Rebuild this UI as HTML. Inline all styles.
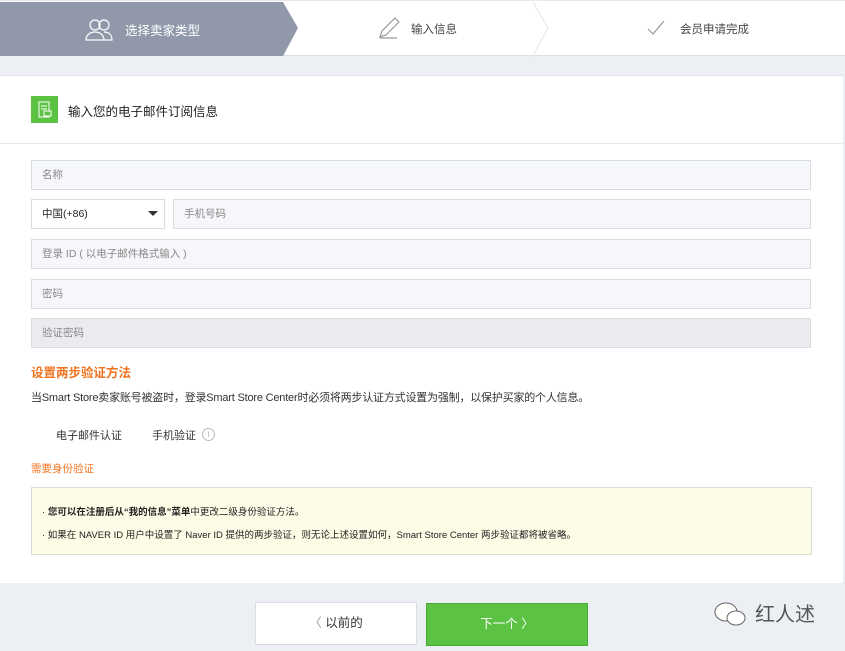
<!DOCTYPE html>
<html><head><meta charset="utf-8"><style>
*{margin:0;padding:0;box-sizing:border-box}
body{width:845px;height:651px;background:#eceff3;font-family:"Liberation Sans","Noto Sans CJK SC",sans-serif;position:relative;overflow:hidden;color:#333}
.abs{position:absolute}
.inp{position:absolute;left:31px;width:780px;height:30px;border:1px solid #d9dce2;background:#f6f7fa;font-size:10.5px;color:#888;padding-left:10px;line-height:28px}
</style></head><body>
<div class="abs" style="left:0;top:0;width:845px;height:56px;background:#fff;border-bottom:1px solid #dde0e6;border-top:1px solid #e6e8ec"></div>
<svg class="abs" style="left:0;top:0" width="845" height="57">
<polygon points="0,2 283,2 298,28 283,56 0,56" fill="#9098aa"/>
<polyline points="533,2 548,28 533,56" fill="none" stroke="#e3e5ea"/>
<g fill="none" stroke="#fff" stroke-width="1.2"><circle cx="95" cy="25" r="5"/><circle cx="104" cy="25" r="5"/><path d="M86 40c0-5 4-8 9-8s9 3 9 8zM104 32c5 0 8 3 8 8h-8"/></g>
<g fill="none" stroke="#999" stroke-width="1.2"><path d="M380 37l2-6 13-13 4 4-13 13zM380 38h17"/></g>
<polyline points="648,29 653,34 664,21" fill="none" stroke="#999" stroke-width="1.2"/>
</svg>
<div class="abs" style="left:125px;top:20px;font-size:12.5px;color:#fff">选择卖家类型</div>
<div class="abs" style="left:411px;top:21px;font-size:11.5px;color:#444">输入信息</div>
<div class="abs" style="left:680px;top:21px;font-size:11.5px;color:#444">会员申请完成</div>
<div class="abs" style="left:0;top:75px;width:843px;height:508px;background:#fff;border-top:1px solid #dde0e6"></div>
<div class="abs" style="left:31px;top:96px;width:27px;height:27px;background:#5bc244"></div>
<svg class="abs" style="left:31px;top:96px" width="27" height="27"><g fill="none" stroke="#fff" stroke-width="1"><path d="M8 6h10v15H8z"/><path d="M10 10h6M10 13h6"/><rect x="13" y="15" width="7" height="5" fill="#5bc244"/></g></svg>
<div class="abs" style="left:68px;top:101px;font-size:12.5px;color:#222">输入您的电子邮件订阅信息</div>
<div class="abs" style="left:0;top:143px;width:843px;height:1px;background:#e6e8ec"></div>
<div class="inp" style="top:160px">名称</div>
<div class="inp" style="top:199px;width:134px;background:#fff;color:#222">中国(+86)<span style="position:absolute;right:6px;top:11px;border:5px solid transparent;border-top:5px solid #333;border-bottom:0"></span></div>
<div class="inp" style="top:199px;left:173px;width:638px">手机号码</div>
<div class="inp" style="top:239px">登录 ID ( 以电子邮件格式输入 )</div>
<div class="inp" style="top:279px">密码</div>
<div class="inp" style="top:318px;background:#e9ebef">验证密码</div>
<div class="abs" style="left:31px;top:362px;font-size:12.5px;color:#f2731f;font-weight:bold">设置两步验证方法</div>
<div class="abs" style="left:31px;top:389px;font-size:11px;color:#333;letter-spacing:-0.2px">当Smart Store卖家账号被盗时，登录Smart Store Center时必须将两步认证方式设置为强制，以保护买家的个人信息。</div>
<div class="abs" style="left:56px;top:427px;font-size:11px">电子邮件认证</div>
<div class="abs" style="left:152px;top:427px;font-size:11px">手机验证</div>
<div class="abs" style="left:202px;top:428px;width:13px;height:13px;border:1px solid #bbb;border-radius:50%;font-size:9px;color:#bbb;text-align:center;line-height:11px">i</div>
<div class="abs" style="left:31px;top:461px;font-size:10.5px;color:#f2731f">需要身份验证</div>
<div class="abs" style="left:31px;top:487px;width:781px;height:68px;background:#fdfce6;border:1px solid #dcdcd0"></div>
<div class="abs" style="left:42px;top:504px;font-size:9.5px;color:#222">· <b>您可以在注册后从“我的信息”菜单</b>中更改二级身份验证方法。</div>
<div class="abs" style="left:42px;top:527px;font-size:9.5px;color:#222">· 如果在 NAVER ID 用户中设置了 Naver ID 提供的两步验证，则无论上述设置如何，Smart Store Center 两步验证都将被省略。</div>
<div class="abs" style="left:255px;top:602px;width:162px;height:43px;background:#fff;border:1px solid #d9dce2;text-align:center;line-height:41px;font-size:12.5px;color:#333"><span style="color:#999">〈</span> 以前的</div>
<div class="abs" style="left:426px;top:603px;width:162px;height:43px;background:#5bc244;border:1px solid #4aa935;text-align:center;line-height:41px;font-size:12.5px;color:#fff">下一个 〉</div>
<div class="abs" style="left:755px;top:598px;font-size:20px;color:#555">红人述</div>
<svg class="abs" style="left:712px;top:600px" width="40" height="30"><g fill="#fff" stroke="#666"><ellipse cx="14" cy="12" rx="11" ry="9"/><ellipse cx="24" cy="18" rx="9" ry="7"/></g></svg>
</body></html>
